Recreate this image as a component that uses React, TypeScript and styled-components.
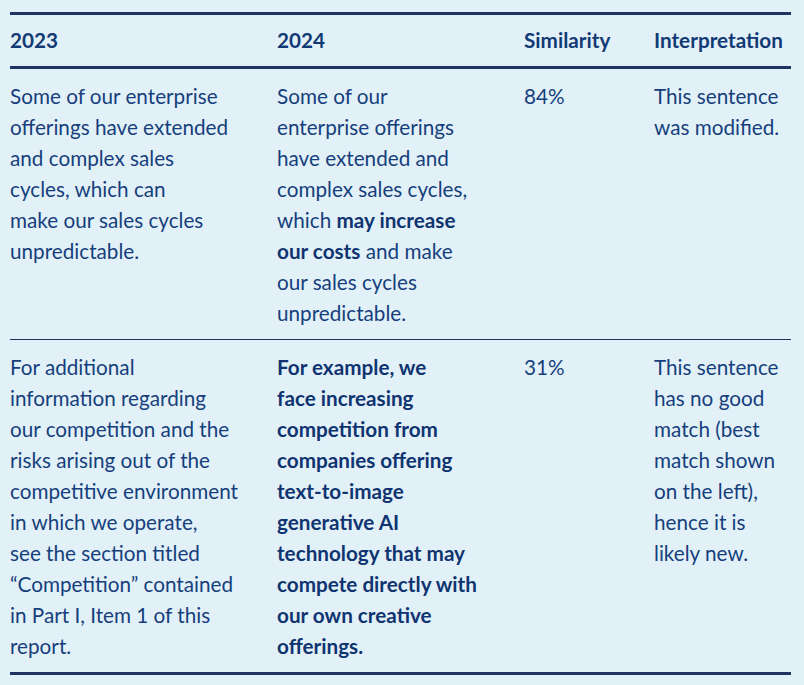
import React from "react";
import styled, { createGlobalStyle } from "styled-components";

const Global = createGlobalStyle`
  html, body { margin: 0; padding: 0; background: #e2f1f8; }
  body { font-family: Lato, "Noto Sans", sans-serif; }
`;

const Page = styled.div`
  background: #e2f1f8;
  width: 804px;
  height: 685px;
  padding: 12px 13px 0 10px;
  box-sizing: border-box;
`;

const Table = styled.table`
  width: 781px;
  border-collapse: collapse;
  table-layout: fixed;
  color: #163f7c;
  font-size: 20.7px;
  line-height: 31px;
  border-top: 3px solid #1f3462;
  border-bottom: 3px solid #1f3462;
`;

const Col = styled.col<{ w: number }>`
  width: ${(p) => p.w}px;
`;

const Th = styled.th`
  text-align: left;
  font-weight: 700;
  color: #123a74;
  padding: 10px 0 10px 0;
  border-bottom: 3px solid #1f3462;
  white-space: nowrap;
  box-sizing: border-box;
`;

const Tr = styled.tr<{ last?: boolean }>`
  border-bottom: ${(p) => (p.last ? "none" : "1px solid #1f3462")};
`;

const Td = styled.td<{ top: number; bottom: number }>`
  vertical-align: top;
  padding: ${(p) => p.top}px 0 ${(p) => p.bottom}px 0;
  white-space: nowrap;
  box-sizing: border-box;
`;

const B = styled.b`
  font-weight: 700;
  color: #0f3470;
`;

const Lines = ({ lines }: { lines: React.ReactNode[] }) => (
  <>
    {lines.map((l, i) => (
      <React.Fragment key={i}>
        {l}
        {i < lines.length - 1 && <br />}
      </React.Fragment>
    ))}
  </>
);

export default function App() {
  return (
    <>
      <Global />
      <Page>
        <Table>
          <colgroup>
            <Col w={267} />
            <Col w={247} />
            <Col w={130} />
            <Col w={137} />
          </colgroup>
          <thead>
            <tr>
              <Th>2023</Th>
              <Th>2024</Th>
              <Th>Similarity</Th>
              <Th>Interpretation</Th>
            </tr>
          </thead>
          <tbody>
            <Tr>
              <Td top={12} bottom={10}>
                <Lines
                  lines={[
                    "Some of our enterprise",
                    "offerings have extended",
                    "and complex sales",
                    "cycles, which can",
                    "make our sales cycles",
                    "unpredictable.",
                  ]}
                />
              </Td>
              <Td top={12} bottom={10}>
                <Lines
                  lines={[
                    "Some of our",
                    "enterprise offerings",
                    "have extended and",
                    "complex sales cycles,",
                    <>which <B>may increase</B></>,
                    <><B>our costs</B> and make</>,
                    "our sales cycles",
                    "unpredictable.",
                  ]}
                />
              </Td>
              <Td top={12} bottom={10}>84%</Td>
              <Td top={12} bottom={10}>
                <Lines lines={["This sentence", "was modified."]} />
              </Td>
            </Tr>
            <Tr last>
              <Td top={12} bottom={10}>
                <Lines
                  lines={[
                    "For additional",
                    "information regarding",
                    "our competition and the",
                    "risks arising out of the",
                    "competitive environment",
                    "in which we operate,",
                    "see the section titled",
                    "\u201cCompetition\u201d contained",
                    "in Part I, Item 1 of this",
                    "report.",
                  ]}
                />
              </Td>
              <Td top={12} bottom={10}>
                <B>
                  <Lines
                    lines={[
                      "For example, we",
                      "face increasing",
                      "competition from",
                      "companies offering",
                      "text-to-image",
                      "generative AI",
                      "technology that may",
                      "compete directly with",
                      "our own creative",
                      "offerings.",
                    ]}
                  />
                </B>
              </Td>
              <Td top={12} bottom={10}>31%</Td>
              <Td top={12} bottom={10}>
                <Lines
                  lines={[
                    "This sentence",
                    "has no good",
                    "match (best",
                    "match shown",
                    "on the left),",
                    "hence it is",
                    "likely new.",
                  ]}
                />
              </Td>
            </Tr>
          </tbody>
        </Table>
      </Page>
    </>
  );
}
